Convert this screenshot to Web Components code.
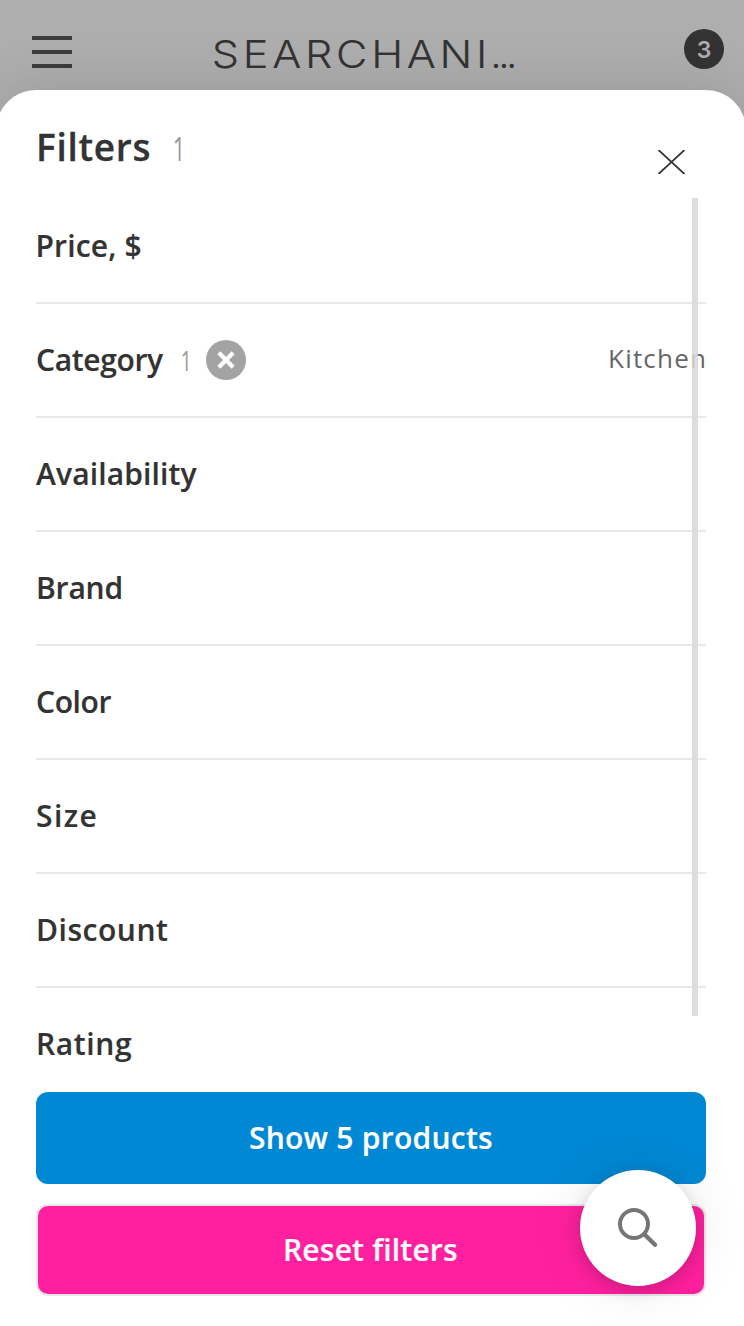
<!DOCTYPE html>
<html lang="en">
<head>
<meta charset="utf-8">
<title>Filters</title>
<style>
html,body{margin:0;height:100%;overflow:hidden;background:#aeaeae}
body{font-family:"Open Sans","Noto Sans",sans-serif;color:#333}
</style>
</head>
<body>
<filter-page></filter-page>
<script>
// Text whose visible width is set by tracking; its box hugs the ink.
class TrackedText extends HTMLElement{
  connectedCallback(){
    const text=this.textContent, w=parseFloat(this.getAttribute('width'));
    const root=this.attachShadow({mode:'open'});
    root.innerHTML=`<style>:host{display:block;flex:none;white-space:nowrap;font-kerning:none;font-variant-ligatures:none}</style><slot></slot>`;
    const cs=getComputedStyle(this);
    const c=document.createElement('canvas').getContext('2d');
    c.font=`${cs.fontWeight} ${cs.fontSize} ${cs.fontFamily}`;
    c.fontKerning='none';
    const m=c.measureText(text);
    const ink=m.actualBoundingBoxLeft+m.actualBoundingBoxRight;
    const n=[...text].length;
    if(n>1)this.style.letterSpacing=((w-ink)/(n-1)).toFixed(3)+'px';
    this.style.width=w+'px';
    this.style.textIndent=m.actualBoundingBoxLeft.toFixed(2)+'px';
  }
}
customElements.define('tracked-text',TrackedText);

function define(name,html){
  const t=document.createElement('template');
  t.innerHTML=html;
  customElements.define(name,class extends HTMLElement{
    constructor(){super();this.attachShadow({mode:'open'}).append(t.content.cloneNode(true));}
  });
}

define('store-header',`<style>
:host{display:flex;align-items:flex-start;height:90px;box-sizing:border-box;background:#aeaeae;color:#333}
svg{display:block;margin:36px 0 0 32px;flex:none}
.title{font:300 38.5px/48px Inter,sans-serif;margin:30px 0 0 142px;transform:scaleX(1.12);transform-origin:0 0;-webkit-text-stroke:.15px #333}
.dots{font:600 29px/48px "Open Sans",sans-serif;margin:33px 0 0 38px}
.badge{width:40px;height:40px;border-radius:50%;background:#333;color:#aeaeae;margin:29px 20px 0 auto;display:flex;align-items:center;justify-content:center;font:600 23px/40px Inter,sans-serif}
.badge span{padding-top:1px}
</style>
<svg width="40" height="32" fill="#3d3d3d"><path d="M0 0h40v4H0zM0 14h40v4H0zM0 28h40v4H0z"/></svg>
<tracked-text class="title" width="241">SEARCHANI</tracked-text><tracked-text class="dots" width="22">…</tracked-text>
<div class="badge"><span>3</span></div>`);

define('filter-row',`<style>
:host{display:flex;align-items:center;height:114px;box-sizing:border-box;border-bottom:2px solid #e8e8e8;font:600 30px/40px "Open Sans",sans-serif;color:#333;-webkit-text-stroke:.15px}
:host([last]){border-color:transparent}
.end{margin-left:auto;padding-bottom:4px}
</style><slot></slot><div class="end"><slot name="value"></slot></div>`);

define('clear-button',`<style>:host{display:block;flex:none;width:40px;height:40px}svg{display:block}</style>
<svg width="40" height="40"><circle cx="20" cy="20" r="20" fill="#a3a3a3"/><path d="M12.8 12.8l14.4 14.4M27.2 12.8L12.8 27.2" stroke="#fff" stroke-width="4.2"/></svg>`);

define('action-button',`<style>
:host{display:flex;justify-content:center;align-items:center;box-sizing:border-box;height:92px;border-radius:12px;background:#0088d4;color:#fff;font:600 30px/40px "Open Sans",sans-serif;-webkit-text-stroke:.15px}
:host([reset]){background:#ff209f;border:2px solid #e8e8e8;margin-top:20px}
</style><slot></slot>`);

define('search-bubble',`<style>
:host{display:block;width:116px;height:116px;border-radius:50%;background:#fff;box-shadow:0 4px 16px rgba(0,0,0,.17),0 0 60px rgba(0,0,0,.09)}
svg{display:block}
</style><svg width="116" height="116" fill="none" stroke="#757575"><circle cx="54" cy="54" r="14" stroke-width="4"/><path d="M64.5 64.5L75 74.8" stroke-width="4.4" stroke-linecap="round"/></svg>`);

define('filter-sheet',`<style>
:host{display:block;box-sizing:border-box;height:1236px;margin:0 -2px 0 -4px;padding:0 40px;border-radius:40px 40px 0 0;background:#fff;box-shadow:0 0 60px rgba(0,0,0,.13);position:relative}
header{display:flex;height:100px;align-items:flex-start}
.name{font:600 37px/50px "Open Sans",sans-serif;margin:32px 0 0 3px;-webkit-text-stroke:.3px}
.count{font-weight:400;color:#999;-webkit-text-stroke:0;transform:scaleX(.68);transform-origin:0 0;font-size:28px}
header .count{font-size:32px;line-height:44px;margin:37px 0 0 24px}
.close{display:block;margin:60px 21.5px 0 auto}
.list{height:902px;overflow:hidden;margin-right:-20px;padding-right:20px}
.value{font:400 26px/34px "Open Sans",sans-serif;color:#666;margin-right:2px;-webkit-text-stroke:0}
.bar{position:absolute;left:696px;top:108px;width:6px;height:818px;background:rgba(217,217,217,.86)}
</style>
<header><tracked-text class="name" width="110.5">Filters</tracked-text><tracked-text class="count" width="8">1</tracked-text>
<svg class="close" width="27" height="24" stroke="#333" stroke-width="1.8"><path d="M.5 0L26.5 24M26.5 0L.5 24"/></svg></header>
<div class="list">
<filter-row><tracked-text width="103" style="margin-left:1.5px">Price, $</tracked-text></filter-row>
<filter-row><tracked-text width="127" style="margin-left:1px">Category</tracked-text><tracked-text class="count" width="7" style="margin-left:18px">1</tracked-text><clear-button style="margin-left:17px"></clear-button><tracked-text slot="value" class="value" width="94">Kitchen</tracked-text></filter-row>
<filter-row><tracked-text width="161.5">Availability</tracked-text></filter-row>
<filter-row><tracked-text width="83.5" style="margin-left:2px">Brand</tracked-text></filter-row>
<filter-row><tracked-text width="74.5" style="margin-left:1px">Color</tracked-text></filter-row>
<filter-row><tracked-text width="58.5" style="margin-left:1px">Size</tracked-text></filter-row>
<filter-row><tracked-text width="130" style="margin-left:2px">Discount</tracked-text></filter-row>
<filter-row last><tracked-text width="94" style="margin-left:2px">Rating</tracked-text></filter-row>
</div>
<action-button><tracked-text width="242">Show 5 products</tracked-text></action-button>
<action-button reset><tracked-text width="172">Reset filters</tracked-text></action-button>
<div class="bar"></div>`);

define('filter-page',`<style>
:host{display:block;width:744px;height:1326px;overflow:hidden;position:relative}
search-bubble{position:absolute;right:48px;bottom:40px}
</style><store-header></store-header><filter-sheet></filter-sheet><search-bubble></search-bubble>`);
</script>
</body>
</html>
